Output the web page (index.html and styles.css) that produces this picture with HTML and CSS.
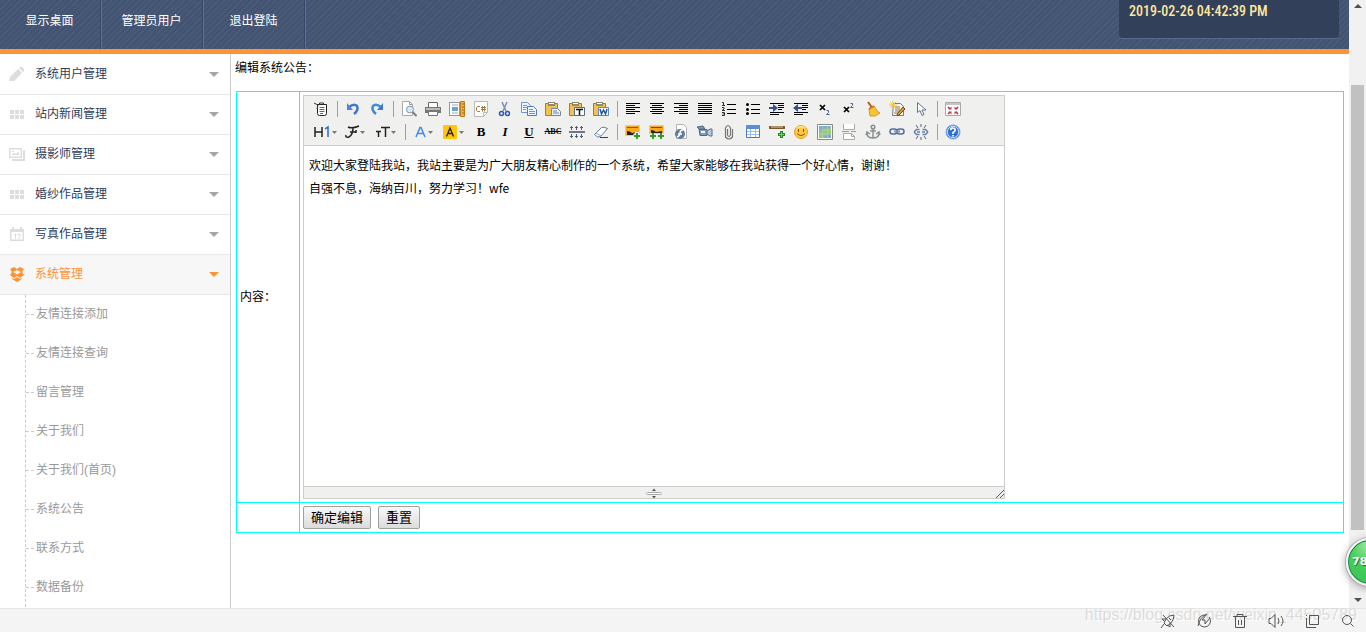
FILE: index.html
```html
<!DOCTYPE html>
<html lang="zh-CN">
<head>
<meta charset="utf-8">
<title>编辑系统公告</title>
<link rel="stylesheet" href="styles.css">
</head>
<body>
<div class="viewport">
  <div class="page">
    <header class="topbar">
      <nav class="topnav">
        <a href="#">显示桌面</a>
        <a href="#">管理员用户</a>
        <a href="#">退出登陆</a>
      </nav>
      <div class="clock">2019-02-26 04:42:39 PM</div>
    </header>
    <div class="body">
      <aside class="sidebar">
        <a class="menu" href="#"><svg class="menu-icon" viewBox="0 0 16 16"><path d="M0 15l1-4 8-8 4 4-8 8zM10 2l1-1h2l2 2v2l-1 1z"/></svg><span>系统用户管理</span><i class="caret"></i></a>
        <a class="menu" href="#"><svg class="menu-icon" viewBox="0 0 16 16"><path d="M1 4h4v4H1zM6 4h4v4H6zM11 4h4v4h-4zM1 9h4v4H1zM6 9h4v4H6zM11 9h4v4h-4z"/></svg><span>站内新闻管理</span><i class="caret"></i></a>
        <a class="menu" href="#"><svg class="menu-icon" viewBox="0 0 16 16"><path fill-rule="evenodd" d="M0 2h13v10H0zM1.500 3.500v7h10v-7zM3 9V8l2-1 2 1 2-2 1 1v2zM3 5h2v1H3zM14 4h2v11H3v-2h11z"/></svg><span>摄影师管理</span><i class="caret"></i></a>
        <a class="menu" href="#"><svg class="menu-icon" viewBox="0 0 16 16"><path d="M1 4h4v4H1zM6 4h4v4H6zM11 4h4v4h-4zM1 9h4v4H1zM6 9h4v4H6zM11 9h4v4h-4z"/></svg><span>婚纱作品管理</span><i class="caret"></i></a>
        <a class="menu" href="#"><svg class="menu-icon" viewBox="0 0 16 16"><path fill-rule="evenodd" d="M1 3h2V1h2v2h6V1h2v2h2v12H1zM2.500 6v7.500h11V6zM5 8h2v5H6V9H5zM8 8h4v1l-2 4H9l2-4H8z"/></svg><span>写真作品管理</span><i class="caret"></i></a>
        <a class="menu active" href="#"><svg class="menu-icon" viewBox="0 0 16 16"><path fill-rule="evenodd" d="M1 3l4-2 3 2 3-2 4 2-2 3 2 3-4 3-3-2-3 2-4-3 2-3zM4 6l4 2.500L12 6 8 4zM3 12l2 1 3-2 3 2 2-1v1l-5 3-5-3z"/></svg><span>系统管理</span><i class="caret"></i></a>
        <ul class="submenu">
          <li><a href="#">友情连接添加</a></li>
          <li><a href="#">友情连接查询</a></li>
          <li><a href="#">留言管理</a></li>
          <li><a href="#">关于我们</a></li>
          <li><a href="#">关于我们(首页)</a></li>
          <li><a href="#">系统公告</a></li>
          <li><a href="#">联系方式</a></li>
          <li><a href="#">数据备份</a></li>
        </ul>
      </aside>
      <main class="content">
        <h1 class="title">编辑系统公告：</h1>
        <form>
        <table class="form">
          <tr>
            <td class="label"><label for="notice">内容：</label></td>
            <td>
              <div class="editor">
                <div class="toolbar">
                  <div class="tools">
                    <button type="button" aria-label="HTML"><svg viewBox="0 0 16 16"><path d="M4.500 3.500h9v9q0 2-2 2h-5q-2 0-2-2z" fill="#fff" stroke="#222"/><path d="M1 2l4 2-1 4M6.500 4V2h4v2" fill="none" stroke="#333"/><path d="M6.500 6.500h5M6.500 8.500h5M6.500 10.500h5M7 12.500h3" stroke="#666"/></svg></button>
                    <i class="sep"></i>
                    <button type="button" aria-label="后退"><svg viewBox="0 0 16 16"><path d="M4 6q5-4 8-1 2 4-3 8" fill="none" stroke="#3f74cf" stroke-width="2.500"/><path d="M2 2v7h6z" fill="#4b86e0"/></svg></button>
                    <button type="button" aria-label="前进"><svg viewBox="0 0 16 16"><path d="M12 6Q7 2 4 5q-2 4 3 8" fill="none" stroke="#3e8bd8" stroke-width="2.500"/><path d="M14 2v7H8z" fill="#3e7bd0"/></svg></button>
                    <i class="sep"></i>
                    <button type="button" aria-label="预览"><svg viewBox="0 0 16 16"><path d="M1.500.5h7l3 3v11h-10z" fill="#fff" stroke="#aaa"/><path d="M8.500.5v3h3" fill="none" stroke="#999"/><circle cx="9" cy="8.500" r="3.500" fill="#d5e9f8" stroke="#8298ad"/><path d="M11.500 11l4 4" stroke="#7e8187" stroke-width="2"/></svg></button>
                    <button type="button" aria-label="打印"><svg viewBox="0 0 16 16"><path d="M3.500 1.500h9v5h-9z" fill="#fff" stroke="#666"/><path d="M0 6h16v6H0z" fill="#777"/><path d="M1 7h14v2H1z" fill="#bbb"/><path d="M3.500 10.500h9v4h-9z" fill="#fff" stroke="#777"/></svg></button>
                    <button type="button" aria-label="模板"><svg viewBox="0 0 16 16"><path d="M.5 1.500h10v13H.5z" fill="#fff" stroke="#335" stroke-dasharray="1 1"/><path d="M3 6h6v4H3z" fill="#6ea2cf"/><path d="M3 12h6M3 4h6" stroke="#9ab"/><path d="M11.500.5h4v15h-4z" fill="#eeb13e" stroke="#bc7c19"/><path d="M13 3h2M13 6h2M13 9h2M13 12h2" stroke="#a66c13"/></svg></button>
                    <button type="button" aria-label="代码"><svg viewBox="0 0 16 16"><path d="M1.500.5h13v11l-4 4h-9z" fill="#fffef9" stroke="#b9b9b9"/><path d="M14.500 11.500h-4v4" fill="none" stroke="#b9b9b9"/><path d="M7 5.500H4.500l-1 1v3l1 1H7M9.500 5v5.500M11.500 5v5.500M8 6.500h5M8 8.500h5" fill="none" stroke="#a07c4c"/></svg></button>
                    <button type="button" aria-label="剪切"><svg viewBox="0 0 16 16"><path d="M5 1l4 9M10 1L6 10" stroke="#7790b5" stroke-width="1.500"/><circle cx="4.500" cy="12.500" r="2" fill="none" stroke="#2558b5" stroke-width="1.500"/><circle cx="10.500" cy="12.500" r="2" fill="none" stroke="#2558b5" stroke-width="1.500"/></svg></button>
                    <button type="button" aria-label="复制"><svg viewBox="0 0 16 16"><path d="M.5 1.500h6l3 3v7h-9z" fill="#edf5ff" stroke="#6f94d2"/><path d="M2 4.500h4M2 6.500h4M2 8.500h3" stroke="#6d98d8"/><path d="M6.500 5.500h6l3 3v6h-9z" fill="#edf5ff" stroke="#4f7cc8"/><path d="M8 8.500h4M8 10.500h6M8 12.500h6" stroke="#6d98d8"/></svg></button>
                    <button type="button" aria-label="粘贴"><svg viewBox="0 0 16 16"><path d="M.5 2.500h12v12H.5z" fill="#f2c154" stroke="#ad7b26"/><path d="M3 1h7v4H3z" fill="#8e8875"/><path d="M4 2h5v1H4z" fill="#fff"/><path d="M6.500 7.500h6l3 3v4h-9z" fill="#e8f0fa" stroke="#7185a5"/><path d="M8 10h4M8 12h6" stroke="#7185a5"/></svg></button>
                    <button type="button" aria-label="粘贴为无格式文本"><svg viewBox="0 0 16 16"><path d="M.5 2.500h12v12H.5z" fill="#f2c154" stroke="#ad7b26"/><path d="M3 1h7v4H3z" fill="#8e8875"/><path d="M4 2h5v1H4z" fill="#fff"/><path d="M5.500 6.500h10v8h-10z" fill="#fff" stroke="#596a80"/><path d="M7 8.500h7M10.500 8v6" stroke="#111" stroke-width="1.500"/></svg></button>
                    <button type="button" aria-label="从Word粘贴"><svg viewBox="0 0 16 16"><path d="M.5 2.500h12v12H.5z" fill="#f2c154" stroke="#ad7b26"/><path d="M3 1h7v4H3z" fill="#8e8875"/><path d="M4 2h5v1H4z" fill="#fff"/><path d="M5.500 6.500h10v8h-10z" fill="#fff" stroke="#6685b8"/><path d="M7 8l1.500 5 2-4 2 4L14 8" fill="none" stroke="#2458a8" stroke-width="1.500"/></svg></button>
                    <i class="sep"></i>
                    <button type="button" aria-label="左对齐"><svg viewBox="0 0 16 16"><path d="M1 2.500h14M1 4.500h9M1 6.500h14M1 8.500h9M1 10.500h14M1 12.500h9" stroke="#000"/></svg></button>
                    <button type="button" aria-label="居中"><svg viewBox="0 0 16 16"><path d="M1 2.500h14M3 4.500h10M1 6.500h14M3 8.500h10M1 10.500h14M3 12.500h10" stroke="#000"/></svg></button>
                    <button type="button" aria-label="右对齐"><svg viewBox="0 0 16 16"><path d="M1 2.500h14M6 4.500h9M1 6.500h14M6 8.500h9M1 10.500h14M6 12.500h9" stroke="#000"/></svg></button>
                    <button type="button" aria-label="两端对齐"><svg viewBox="0 0 16 16"><path d="M1 2.500h14M1 4.500h14M1 6.500h14M1 8.500h14M1 10.500h14M1 12.500h14" stroke="#000"/></svg></button>
                    <button type="button" aria-label="编号"><svg viewBox="0 0 16 16"><path d="M6 3.500h9M6 8.500h9M6 12.500h9" stroke="#000"/><path d="M1 1.500h1.500v3M1 4.500h3M1 6.500h2v1.500L1 9.500h3M1 11.500h2.500v3H1M1.500 13h2" fill="none" stroke="#333"/></svg></button>
                    <button type="button" aria-label="项目符号"><svg viewBox="0 0 16 16"><path d="M6 3.500h9M6 8.500h9M6 12.500h9" stroke="#000"/><circle cx="2.500" cy="3.500" r="1.500"/><circle cx="2.500" cy="8.500" r="1.500"/><circle cx="2.500" cy="12.500" r="1.500"/></svg></button>
                    <button type="button" aria-label="增加缩进"><svg viewBox="0 0 16 16"><path d="M1 2.500h14M9 4.500h6M9 6.500h6M9 8.500h4M1 11.500h14M1 13.500h9" stroke="#000"/><path d="M0 6h4V3l5 4-5 4V8H0z" fill="#344f94"/></svg></button>
                    <button type="button" aria-label="减少缩进"><svg viewBox="0 0 16 16"><path d="M1 2.500h14M9 4.500h6M9 6.500h6M9 8.500h4M1 11.500h14M1 13.500h9" stroke="#000"/><path d="M9 6H5V3L0 7l5 4V8h4z" fill="#344f94"/></svg></button>
                    <button type="button" aria-label="下标"><svg viewBox="0 0 16 16"><path d="M3 4l5 5M8 4L3 9" stroke="#000" stroke-width="1.700"/><path d="M9.500 9.500h2v2l-2 2h3" fill="none" stroke="#4966a0"/></svg></button>
                    <button type="button" aria-label="上标"><svg viewBox="0 0 16 16"><path d="M3 6l5 5M8 6l-5 5" stroke="#000" stroke-width="1.700"/><path d="M9.500 2.500h2v2l-2 2h3" fill="none" stroke="#4966a0"/></svg></button>
                    <button type="button" aria-label="清理代码"><svg viewBox="0 0 16 16"><path d="M3 1l5 7" stroke="#a95b24" stroke-width="2"/><path d="M4 8l5-3 4 6 2 1-5 3H5z" fill="#f8c531" stroke="#d99920"/><path d="M4 8l5-3" stroke="#db6d2a" stroke-width="2"/></svg></button>
                    <button type="button" aria-label="一键排版"><svg viewBox="0 0 16 16"><path d="M4.500 2.500h7l3 3v9H3.500z" fill="#f7f5ed" stroke="#6c7d91"/><path d="M6 6h5M6 8h5M6 10h5M5 12h4" stroke="#987a53"/><path d="M0 4h8M4 0v8M1 1l6 6M7 1L1 7" stroke="#f4c332"/><path d="M14 6l2 2-6 6-2 .5.5-2z" fill="#e39832" stroke="#754321"/></svg></button>
                    <button type="button" aria-label="全选"><svg viewBox="0 0 16 16"><path d="M4.500 1.500v10l2.500-2 2 5 2-1-2-4.500h4z" fill="#fff" stroke="#657491"/></svg></button>
                    <i class="sep"></i>
                    <button type="button" aria-label="全屏显示"><svg viewBox="0 0 16 16"><path d="M.5 1.500h15v13H.5z" fill="#fff" stroke="#aaa"/><path d="M1 2h14v2H1z" fill="#c5c5c5"/><path d="M3 6l2 2M13 6l-2 2M3 13l2-2M13 13l-2-2" stroke="#b4242c" stroke-width="1.500"/><path d="M6.500 5.500v3h-3zM9.500 5.500v3h3zM6.500 13.500v-3h-3zM9.500 13.500v-3h3z" fill="#c63f46"/></svg></button>
                  </div>
                  <div class="tools">
                    <button type="button" class="drop" aria-label="段落"><svg viewBox="0 0 26 16"><path d="M3 3v10M10 3v10M3 8h7" stroke="#222" stroke-width="1.500"/><path d="M13 5l3-2v10" fill="none" stroke="#2569d8" stroke-width="1.500"/><path d="M20 7h5l-2.500 3z" fill="#777"/></svg></button>
                    <button type="button" class="drop" aria-label="字体"><svg viewBox="0 0 26 16"><path d="M5 3q4 2 11-1M10 3q0 8-4 10-4 1-3-2M7 8h6M13 6v3" fill="none" stroke="#222" stroke-width="1.500"/><path d="M17 7h5l-2.500 3z" fill="#777"/></svg></button>
                    <button type="button" class="drop" aria-label="文字大小"><svg viewBox="0 0 26 16"><path d="M2 7.500h5M4.500 7v6M7 3.500h9M11.500 3v10" stroke="#222" stroke-width="1.500"/><path d="M17 7h5l-2.500 3z" fill="#777"/></svg></button>
                    <i class="sep narrow"></i>
                    <button type="button" class="drop color" aria-label="文字颜色"><svg viewBox="0 0 26 16"><path d="M5 13L9 3.500h1L14 13M7 9.500h5" fill="none" stroke="#4387ea" stroke-width="1.500"/><path d="M17 7h5l-2.500 3z" fill="#777"/></svg></button>
                    <button type="button" class="drop color" aria-label="文字背景"><svg viewBox="0 0 26 16"><rect x="2" y="1" width="14" height="14" rx="1" fill="#ffc60a"/><path d="M5.500 12.500L9 4l3.500 8.500M7 9.500h4" fill="none" stroke="#222" stroke-width="1.300"/><path d="M18 7h5l-2.500 3z" fill="#777"/></svg></button>
                    <button type="button" class="glyph bold">B</button>
                    <button type="button" class="glyph italic">I</button>
                    <button type="button" class="glyph under">U</button>
                    <button type="button" class="glyph strike">ABC</button>
                    <button type="button" aria-label="行距"><svg viewBox="0 0 16 16"><path d="M0 8h16" stroke="#6e7783" stroke-width="2"/><path d="M2.500 2v4M7.500 2v4M12.500 2v4M2.500 10v4M7.500 10v4M12.500 10v4M1 3.500h3M6 3.500h3M11 3.500h3M1 12.500h3M6 12.500h3M11 12.500h3" stroke="#4d617e"/></svg></button>
                    <button type="button" aria-label="删除格式"><svg viewBox="0 0 16 16"><path d="M1.500 10.500l7-7q2-1 6 1l-7 8q-3 2-6-2z" fill="#fff" stroke="#607da8"/><path d="M3 9l5 3" stroke="#91a9ca"/><path d="M7 13.500h8" stroke="#345"/></svg></button>
                    <i class="sep"></i>
                    <button type="button" aria-label="图片"><svg viewBox="0 0 16 16"><path d="M.5 1.500h14v10H.5z" fill="#f9a91f" stroke="#ccc"/><path d="M2 3h11v1H2z" fill="#8a5914"/><path d="M2 7q3 0 5 2l6-1v3H2z" fill="#222"/><path d="M12 8v7M8.500 11.500h7" stroke="#f0f0ee" stroke-width="4"/><path d="M12 9v6M9 12h6" stroke="#339b25" stroke-width="2"/></svg></button>
                    <button type="button" aria-label="批量图片上传"><svg viewBox="0 0 16 16"><path d="M.5 1.500h14v8H.5z" fill="#f9a91f" stroke="#ccc"/><path d="M2 3h11v1H2z" fill="#72480c"/><path d="M2 6q3 0 5 2l6-1v2H2z" fill="#222"/><path d="M4 9v6M1 12h6M12 9v6M9 12h6" stroke="#f0f0ee" stroke-width="3"/><path d="M4 9v6M1 12h6M12 9v6M9 12h6" stroke="#339b25" stroke-width="2"/></svg></button>
                    <button type="button" aria-label="Flash"><svg viewBox="0 0 16 16"><path d="M3.500.5h7l3 3v11h-10z" fill="#fff" stroke="#b3b3b3"/><circle cx="7" cy="10" r="5" fill="#607c9e"/><path d="M10 6Q7 6 7 9t-3 4M5 10h4" fill="none" stroke="#fff" stroke-width="1.500"/></svg></button>
                    <button type="button" aria-label="视音频"><svg viewBox="0 0 16 16"><path d="M0 3l6-1 2 3H2zM2 5.500h8v6H3z" fill="#829bb6" stroke="#4e6784"/><path d="M10 7l3-2h2v7h-2l-3-2z" fill="#b8cadd" stroke="#536e8b"/><path d="M4 7h4v2H4z" fill="#eef5fc"/></svg></button>
                    <button type="button" aria-label="插入文件"><svg viewBox="0 0 16 16"><path d="M6.500 5v6q1.500 3 3 0V4q-2.500-5-5 0v9q3.500 4 7 0V5" fill="none" stroke="#777" stroke-width="1.200"/></svg></button>
                    <button type="button" aria-label="表格"><svg viewBox="0 0 16 16"><path d="M1.500 1.500h13v12h-13z" fill="#fff" stroke="#4b78bd"/><path d="M1 1h14v4H1z" fill="#5f8fd3"/><path d="M2 7.500h12M2 10.500h12M5.500 5v8M10.500 5v8" stroke="#9bbcec"/></svg></button>
                    <button type="button" aria-label="插入横线"><svg viewBox="0 0 16 16"><path d="M1 3.500h14" stroke="#7d552d" stroke-width="3" stroke-linecap="round"/><path d="M2 3h12" stroke="#e9cfa4"/><path d="M12.500 7v7M9 10.500h7" stroke="#23892a" stroke-width="3"/><path d="M12.500 8v5M10 10.500h5" stroke="#75cf68"/></svg></button>
                    <button type="button" aria-label="插入表情"><svg viewBox="0 0 16 16"><circle cx="8" cy="8" r="6.500" fill="#ffc83f" stroke="#e6a02c"/><path d="M5.500 5v3M10.500 5v3M4 9.500q4 4 8 0" fill="none" stroke="#865014"/><path d="M4 4q4-3 8 0" fill="none" stroke="#ffe890" stroke-width="1.500"/></svg></button>
                    <button type="button" aria-label="百度地图"><svg viewBox="0 0 16 16"><path d="M.5.5h15v15H.5z" fill="#fff" stroke="#888"/><path d="M2 2h12v12H2z" fill="#79aed0"/><path d="M2 8l3-1 2-3 4 1 3-3v9q-4-2-6 1t-6 2z" fill="#9cc777"/><path d="M5.500 2v12M10.500 2v12M2 6h12M2 10h12" stroke="#b7d7d0" stroke-width=".5"/></svg></button>
                    <button type="button" aria-label="插入分页符"><svg viewBox="0 0 16 16"><path d="M2.500 0v5.500h11V0M2.500 15.500v-6h8l3 3v3z" fill="#fff" stroke="#aaa"/><path d="M1 7.500h7M10 7.500h5" stroke="#999"/><path d="M10.500 9.500v3h3" fill="none" stroke="#aaa"/></svg></button>
                    <button type="button" aria-label="锚点"><svg viewBox="0 0 16 16"><circle cx="8" cy="3" r="1.800" fill="none" stroke="#8b8f94" stroke-width="1.500"/><path d="M8 5v9M5 7h6M2 9q0 5 6 5 6 0 6-5M1 11l1-3 3 2M15 11l-1-3-3 2" fill="none" stroke="#8b8f94" stroke-width="1.500"/></svg></button>
                    <button type="button" aria-label="超级链接"><svg viewBox="0 0 16 16"><rect x="1" y="5" width="7" height="5" rx="2.500" fill="none" stroke="#526f9e" stroke-width="1.500"/><rect x="8" y="5" width="7" height="5" rx="2.500" fill="none" stroke="#526f9e" stroke-width="1.500"/><path d="M5 7.500h6" stroke="#7e97bb" stroke-width="2"/></svg></button>
                    <button type="button" aria-label="取消超级链接"><svg viewBox="0 0 16 16"><path d="M6.500 5.500h-3l-2 2v1l2 2h3M9.500 5.500h3l2 2v1l-2 2h-3M4 8h3M9 8h3" fill="none" stroke="#6480ad" stroke-width="1.500"/><path d="M8 0v3M3 1l2 3M13 1l-2 3M8 13v3M3 15l2-3M13 15l-2-3" stroke="#536278"/></svg></button>
                    <i class="sep"></i>
                    <button type="button" aria-label="关于"><svg viewBox="0 0 16 16"><circle cx="8" cy="8" r="7" fill="#2f6fdc" stroke="#7ba4e0"/><circle cx="8" cy="8" r="5.700" fill="none" stroke="#d6e7fc"/><path d="M5.500 6q1-3 4-1.500 2 2-1.500 4V10M8 11v1.500" fill="none" stroke="#fff" stroke-width="1.700"/></svg></button>
                  </div>
                </div>
                <textarea id="notice" class="text" spellcheck="false">欢迎大家登陆我站，我站主要是为广大朋友精心制作的一个系统，希望大家能够在我站获得一个好心情，谢谢！
自强不息，海纳百川，努力学习！wfe</textarea>
                <div class="status">
                  <svg class="grip" viewBox="0 0 16 10"><path d="M6 3l2-2.500L10 3zM6 8l2 2.500L10 8z" fill="#555"/><rect x=".5" y="4.500" width="15" height="2" rx="1" fill="#fff" stroke="#aaa"/></svg>
                  <svg class="corner" viewBox="0 0 8 8"><path d="M0 8l8-8M4 8l4-4" stroke="#555"/></svg>
                </div>
              </div>
            </td>
          </tr>
          <tr>
            <td class="label"></td>
            <td class="actions"><div class="buttons"><button type="submit" class="push">确定编辑</button><button type="reset" class="push">重置</button></div></td>
          </tr>
        </table>
        </form>
      </main>
    </div>
  </div>
  <div class="scroll" aria-hidden="true">
    <i class="arrow up"></i>
    <i class="thumb"></i>
    <i class="arrow down"></i>
  </div>
</div>
<footer class="bottombar">
  <span class="watermark">https://blog.csdn.net/weixin_44505789</span>
  <button type="button" aria-label="加速"><svg viewBox="0 0 16 16"><path d="M14 2q-5 0-8 4l-2 4 3 3 4-3q3-3 3-8zM6 6L2 6l3 3M10 10v4l-3-2M4 11l-3 4M3 2l11 12M9 5l2 2"/></svg></button>
  <button type="button" aria-label="下载加速"><svg viewBox="0 0 16 16"><path d="M13 4a6 6 0 1 1-4-2M2 13q2-9 9-12M11 1L6 7h3v4l5-6"/></svg></button>
  <button type="button" aria-label="清理"><svg viewBox="0 0 16 16"><path d="M1 3.500h14M5 3V1.500h6V3M3.500 4v10.500h9V4M6.500 7v5M9.500 7v5"/></svg></button>
  <button type="button" aria-label="静音"><svg viewBox="0 0 16 16"><path d="M1 5.500h2l4-4v13l-4-4H1zM10 5q2 3 0 6M13 3q4 5 0 10"/></svg></button>
  <button type="button" aria-label="窗口"><svg viewBox="0 0 16 16"><path d="M5.500 2.500h9v9h-9zM2.500 5v9.500H12M2.500 2v1"/></svg></button>
  <button type="button" aria-label="缩放"><svg viewBox="0 0 16 16"><circle cx="7" cy="7" r="4.500"/><path d="M10.500 10.500l3 3"/></svg></button>
</footer>
<div class="ball">78</div>
</body>
</html>
```
FILE: styles.css
```css
* { box-sizing: border-box; }
body {
  margin: 0;
  height: 100vh;
  display: flex;
  flex-direction: column;
  overflow: hidden;
  position: relative;
  background: #fff;
  font: 12px/18px "Liberation Sans", "Noto Sans CJK SC", sans-serif;
  color: #000;
}
a { text-decoration: none; color: inherit; }
button { font: inherit; }

.viewport { flex: 1; min-height: 0; display: flex; }
.page { flex: 1; min-width: 0; display: flex; flex-direction: column; }

.topbar {
  display: flex;
  justify-content: space-between;
  align-items: flex-start;
  height: 54px;
  padding-right: 10px;
  border-bottom: 5px solid #ff9233;
  background: repeating-linear-gradient(135deg, #425371 0 2px, #495a78 2px 4px);
}
.topnav { display: flex; align-self: stretch; }
.topnav a {
  width: 102px;
  padding: 12px 2px 0 0;
  text-align: center;
  color: #fff;
  border-right: 1px solid #5f7191;
  box-shadow: inset -1px 0 #35476a;
}
.clock {
  width: 220px;
  height: 38px;
  padding: 2px 10px;
  background: #324059;
  border-radius: 0 0 3px 3px;
  box-shadow: 0 1px #566a8c;
  color: #ffe7a3;
  font: 500 14px/18px "Roboto Condensed", "Liberation Sans Narrow", Roboto, sans-serif;
}

.body { flex: 1; min-height: 0; display: flex; }
.sidebar { width: 231px; padding-top: 1px; border-right: 1px solid #ccc; }
.menu {
  display: flex;
  align-items: center;
  height: 40px;
  padding: 0 11px 1px 9px;
  border-bottom: 1px solid #e8e8e8;
  color: #2b3d5c;
}
.menu span { flex: 1; margin-left: 10px; }
.menu-icon { width: 16px; height: 16px; fill: #ddd; }
.caret { border: 5px solid transparent; border-top-color: #a6a6a6; border-bottom: 0; }
.menu.active { background: #f7f7f7; color: #ff9233; }
.menu.active .menu-icon { fill: #ff9233; }
.menu.active .caret { border-top-color: #ff9233; }
.submenu {
  list-style: none;
  margin: 0 0 0 25px;
  padding: 0;
  border-left: 1px dashed #ccc;
}
.submenu li { display: flex; align-items: center; height: 39px; color: #999; padding-bottom: 1px; }
.submenu li::before { content: ""; width: 8px; margin-right: 2px; border-top: 1px dashed #ccc; }

.content { flex: 1; min-width: 0; padding: 5px 5px 4px 4px; }
.title { margin: 0 0 14px; font-size: 12px; line-height: 18px; font-weight: normal; }
.content form { padding-left: 1px; }
.form { width: 100%; border-collapse: collapse; }
.form td { border: 1px solid #00ffff; padding: 3px; }
.form .label { width: 63px; }
.editor { width: 702px; border: 1px solid #ccc; background: #fff; }
.toolbar { padding: 1px 5px 2px; background: #f0f0ee; border-bottom: 1px solid #ccc; }
.tools { display: flex; align-items: center; height: 23px; }
.tools button {
  display: flex;
  align-items: center;
  justify-content: center;
  width: 24px;
  height: 22px;
  padding: 0;
  border: 0;
  background: none;
}
.tools svg { height: 16px; width: 16px; }
.tools .drop { width: 31px; }
.tools .drop svg { width: 26px; }
.tools .color { width: 30px; }
.sep { width: 8px; height: 16px; display: flex; justify-content: center; }
.sep::before { content: ""; width: 1px; background: #a0a0a0; }
.sep.narrow { width: 7px; }
.tools .glyph { font: bold 13px/16px "Liberation Serif", serif; color: #000; }
.tools .italic { font-style: italic; }
.tools .under { text-decoration: underline; }
.tools .strike { font-size: 8px; text-decoration: line-through; }
.text {
  display: block;
  width: 100%;
  height: 340px;
  padding: 7px 5px;
  border: 0;
  outline: 0;
  resize: none;
  color: #000;
  font: 12px/23px "Noto Sans CJK SC", sans-serif;
}
.status {
  display: grid;
  grid-template-columns: 1fr 16px 1fr;
  align-items: end;
  height: 12px;
  background: #f0f0ee;
  border-top: 1px solid #ccc;
}
.grip { grid-column: 2; width: 16px; height: 10px; }
.corner { grid-column: 3; width: 8px; height: 8px; justify-self: end; }
.buttons { display: flex; gap: 7px; }
.push {
  height: 23px;
  padding: 0 7px;
  border: 1px solid #a0a0a0;
  border-radius: 2px;
  background: linear-gradient(#f8f8f8, #dcdcdc);
  font-size: 13px;
  line-height: 19px;
  color: #000;
}

.scroll {
  width: 17px;
  display: grid;
  grid-template-rows: 11px 74fr 445fr 61fr 17px;
  justify-items: center;
  align-items: center;
  background: #f1f1f1;
}
.thumb { grid-row: 3; width: 13px; height: 100%; background: #c1c1c1; }
.arrow { border: 4px solid transparent; }
.up { border-top: 0; border-bottom-color: #505050; }
.down { grid-row: 5; border-bottom: 0; border-top-color: #505050; }

.bottombar {
  position: relative;
  display: flex;
  justify-content: flex-end;
  align-items: center;
  gap: 20px;
  height: 24px;
  padding: 1px 10px 0;
  background: #f4f4f4;
  border-top: 1px solid #e6e6e6;
}
.bottombar button { position: relative; display: flex; padding: 0; border: 0; background: none; }
.bottombar svg { width: 16px; height: 16px; fill: none; stroke: #555; }
.watermark {
  position: absolute;
  right: 9px;
  top: -3px;
  font-size: 16px;
  color: #dcdcdc;
  text-shadow: 1px 1px #fff;
}
.ball {
  position: absolute;
  right: -28px;
  top: 538px;
  width: 48px;
  height: 48px;
  padding-left: 4px;
  border: 2px solid #f4f4f4;
  border-radius: 50%;
  background: radial-gradient(circle at 50% 10%, #a5eba8, #48cc5a 45%, #35c455);
  box-shadow: inset 0 0 0 1px #14824d, 0 0 0 1px #aaa, 0 2px 8px #999;
  color: #fff;
  font: bold 11px/44px "DejaVu Sans", sans-serif;
  text-shadow: 1px 1px #267b38;
}
```
